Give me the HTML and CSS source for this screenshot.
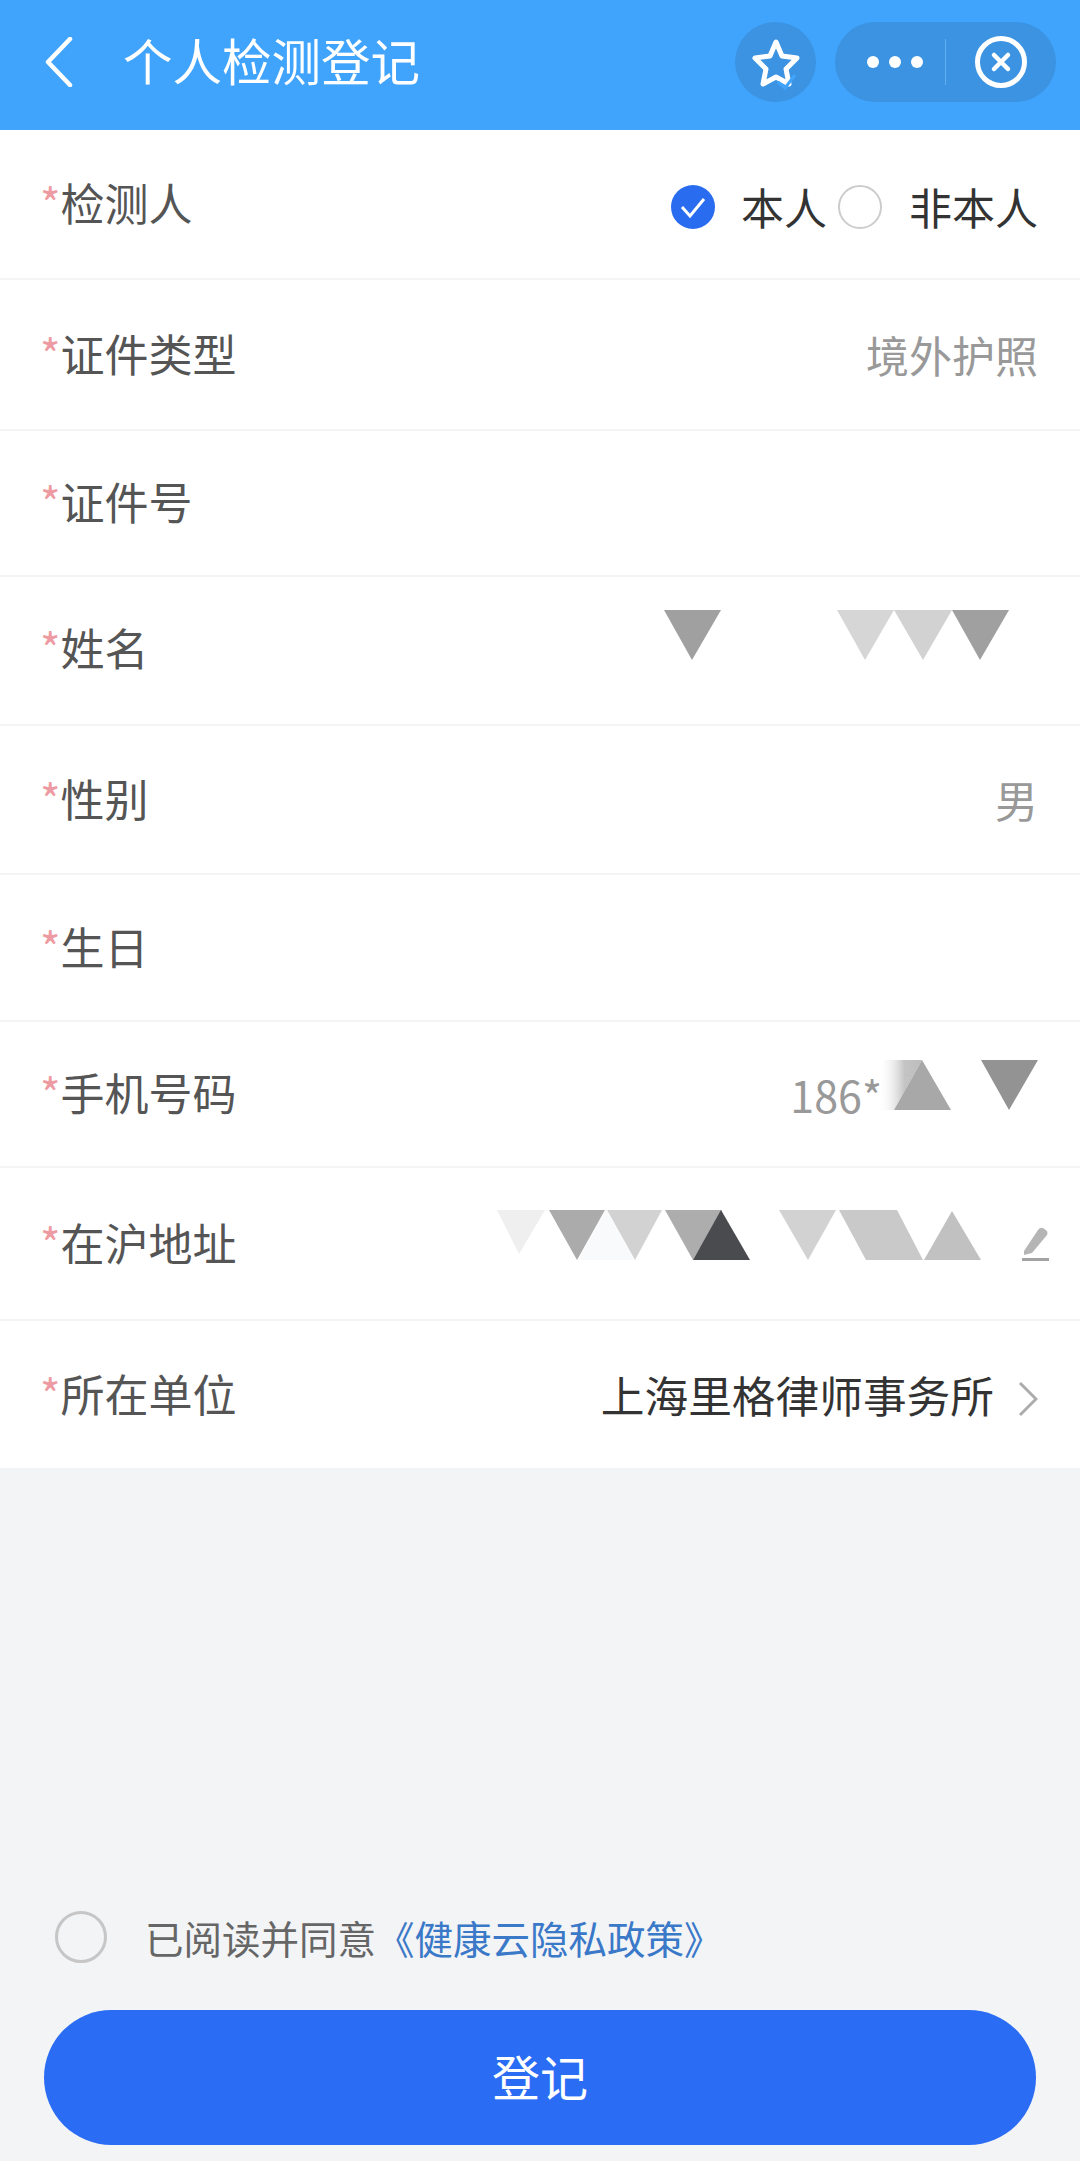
FILE: index.html
```html
<!DOCTYPE html>
<html lang="zh-CN">
<head>
    <meta charset="UTF-8">
    <meta name="viewport" content="width=device-width, initial-scale=1.0">
    <title>个人检测登记</title>
    <link rel="stylesheet" href="styles.css">
</head>
<body>
    <header class="topbar">
        <svg class="back" width="28" height="50" viewBox="0 0 28 50"><path d="M25 2 L3 25 L25 48" fill="none" stroke="#fff" stroke-width="4.5" stroke-linecap="round" stroke-linejoin="round"/></svg>
        <h1 class="title">个人检测登记</h1>
        <div class="actions">
            <div class="star-btn">
                <svg width="50" height="52" viewBox="0 0 50 52"><path d="M25 4 L31 18 L46 20 L35 31 L38 46 L25 39 L12 46 L15 31 L4 20 L19 18 Z" fill="none" stroke="#fff" stroke-width="5" stroke-linejoin="round"/><path d="M27 44 L34 50 L44 37" fill="none" stroke="#41a4fc" stroke-width="3"/></svg>
            </div>
            <div class="capsule">
                <div class="dots"><span></span><span></span><span></span></div>
                <div class="capsule-line"></div>
                <svg class="close" width="54" height="54" viewBox="0 0 54 54"><circle cx="27" cy="27" r="23.5" fill="none" stroke="#fff" stroke-width="5"/><path d="M20 20 L34 34 M34 20 L20 34" stroke="#fff" stroke-width="4.5" stroke-linecap="round"/></svg>
            </div>
        </div>
    </header>

    <main class="form">
        <div class="row">
            <label class="label"><i>*</i>检测人</label>
            <div class="radios">
                <svg class="radio" width="44" height="44" viewBox="0 0 44 44"><circle cx="22" cy="22" r="22" fill="#2a6cf0"/><path d="M11 22 L19 31 L33 14" fill="none" stroke="#fff" stroke-width="3"/></svg>
                <span class="value dark">本人</span>
                <span class="radio-empty"></span>
                <span class="value dark">非本人</span>
            </div>
        </div>
        <div class="row">
            <label class="label"><i>*</i>证件类型</label>
            <span class="value">境外护照</span>
        </div>
        <div class="row">
            <label class="label"><i>*</i>证件号</label>
        </div>
        <div class="row">
            <label class="label name-label"><i>*</i>姓名</label>
            <svg class="mosaic mosaic-name" width="345" height="50" viewBox="0 0 345 50">
                <polygon points="0,0 57,0 28,50" fill="#a0a0a0"/>
                <polygon points="173,0 230,0 201,50" fill="#d6d6d6"/>
                <polygon points="230,0 288,0 259,50" fill="#d2d2d2"/>
                <polygon points="288,0 345,0 316,50" fill="#a0a0a0"/>
            </svg>
        </div>
        <div class="row">
            <label class="label"><i>*</i>性别</label>
            <span class="value">男</span>
        </div>
        <div class="row">
            <label class="label"><i>*</i>生日</label>
        </div>
        <div class="row">
            <label class="label"><i>*</i>手机号码</label>
            <div class="phone">
                <span class="value phone-value">186*</span>
                <svg class="mosaic mosaic-phone" width="160" height="50" viewBox="0 0 160 50">
                    <defs><linearGradient id="fade" x1="0" x2="1" y1="0" y2="0"><stop offset="0" stop-color="#fff" stop-opacity="0"/><stop offset="0.6" stop-color="#c4c4c4"/><stop offset="1" stop-color="#bdbdbd"/></linearGradient></defs>
                    <polygon points="6,0 44,0 16,50 0,50" fill="url(#fade)"/>
                    <polygon points="44,0 73,50 16,50" fill="#a8a8a8"/>
                    <polygon points="103,0 160,0 131,50" fill="#939393"/>
                </svg>
            </div>
        </div>
        <div class="row">
            <label class="label"><i>*</i>在沪地址</label>
            <div class="address">
                <svg class="mosaic mosaic-address" width="484" height="50" viewBox="0 0 484 50">
                    <polygon points="0,0 48,0 22,44" fill="#efefef"/>
                    <polygon points="52,0 108,0 80,50" fill="#ababab"/>
                    <polygon points="81,50 109,0 137,50" fill="#f9fafb"/>
                    <polygon points="110,0 165,0 138,50" fill="#d2d2d2"/>
                    <polygon points="168,0 225,0 196,50" fill="#adadad"/>
                    <polygon points="196,50 224,0 253,50" fill="#4a4b4e"/>
                    <polygon points="282,0 339,0 311,50" fill="#d2d2d2"/>
                    <polygon points="342,0 400,0 426,50 369,50" fill="#c9c9c9"/>
                    <polygon points="427,50 455,1 484,50" fill="#c1c1c1"/>
                </svg>
                <svg class="pencil" width="28" height="34" viewBox="0 0 28 34"><path d="M3 24 L17 3 Q19 0 22 1 L26 4 Q27 6 26 8 L11 26 L3 28 Z" fill="#b5b5b5"/><rect x="1" y="31" width="27" height="3" fill="#a3a3a3"/></svg>
            </div>
        </div>
        <div class="row">
            <label class="label"><i>*</i>所在单位</label>
            <div class="company">
                <span class="value dark company-value">上海里格律师事务所</span>
                <svg class="chevron" width="20" height="36" viewBox="0 0 20 36"><path d="M2 2 L18 18 L2 34" fill="none" stroke="#acacac" stroke-width="3"/></svg>
            </div>
        </div>
    </main>

    <footer class="footer">
        <div class="agree">
            <span class="agree-radio"></span>
            <span class="agree-text">已阅读并同意<a class="agree-link">《健康云隐私政策》</a></span>
        </div>
        <button class="submit">登记</button>
    </footer>
</body>
</html>
```

FILE: styles.css
```css
* {
    box-sizing: border-box;
}

body {
    margin: 0;
    height: 2161px;
    display: flex;
    flex-direction: column;
    background: #f3f4f6;
    font-family: "Noto Sans CJK SC", "Noto Sans", sans-serif;
}

.topbar {
    height: 130px;
    flex: none;
    display: flex;
    align-items: center;
    padding: 0 24px 6px 45px;
    background: #41a4fc;
    color: #fff;
}

.back {
    flex: none;
}

.title {
    margin: 0 0 4px 50px;
    font-size: 49.5px;
    font-weight: 400;
    line-height: 1;
}

.actions {
    margin-left: auto;
    display: flex;
    gap: 19px;
}

.star-btn {
    width: 81px;
    height: 80px;
    padding-top: 4px;
    border-radius: 50%;
    background: #3b93e2;
    display: flex;
    align-items: center;
    justify-content: center;
}

.capsule {
    width: 221px;
    height: 80px;
    border-radius: 40px;
    background: #3b93e2;
    display: flex;
    align-items: center;
    padding-left: 32px;
}

.dots {
    display: flex;
    gap: 10px;
}

.dots span {
    width: 12px;
    height: 12px;
    border-radius: 50%;
    background: #fff;
}

.capsule-line {
    width: 1px;
    height: 46px;
    margin-left: 22px;
    background: #62aef0;
}

.close {
    margin-left: 28px;
}

.form {
    display: grid;
    grid-template-rows: 150px 151px 146px 149px 149px 147px 146px 153px 147px;
    background: #fff;
}

.row {
    display: flex;
    align-items: center;
    justify-content: space-between;
    padding: 0 42px 0 40px;
    border-bottom: 2px solid #f3f4f6;
}

.row:last-child {
    border-bottom: none;
}

.label {
    margin-bottom: 4px;
    font-size: 44px;
    line-height: 1;
    color: #555;
}

.name-label {
    margin-bottom: 8px;
}

.label i {
    font-style: normal;
    color: #ee9aa2;
}

.value {
    font-size: 43px;
    line-height: 1;
    color: #999;
}

.value.dark {
    color: #333;
}

.company-value {
    font-size: 43.7px;
}

.radios {
    display: flex;
    align-items: center;
    padding-top: 5px;
}

.radio {
    margin-right: 26px;
}

.radio-empty {
    width: 44px;
    height: 44px;
    margin: 0 27px 0 11px;
    border: 2px solid #ccc;
    border-radius: 50%;
}

.mosaic {
    display: block;
    flex: none;
}

.mosaic-name {
    margin: 0 29px 32px 0;
}

.phone {
    display: flex;
    align-items: center;
}

.phone-value {
    margin-right: -4px;
}

.mosaic-phone {
    margin-bottom: 18px;
}

.address {
    display: flex;
    align-items: center;
}

.mosaic-address {
    margin-bottom: 17px;
}

.pencil {
    margin: 0 -11px 0 40px;
}

.company {
    display: flex;
    align-items: center;
    gap: 24px;
}

.chevron {
    margin-top: 8px;
}

.footer {
    margin-top: auto;
    padding: 0 44px 16px;
}

.agree {
    display: flex;
    align-items: center;
    margin-bottom: 45px;
    padding-left: 11px;
}

.agree-radio {
    width: 52px;
    height: 52px;
    border: 3px solid #c6c6c6;
    border-radius: 50%;
}

.agree-text {
    margin-left: 38px;
    font-size: 38.5px;
    color: #666;
}

.agree-link {
    color: #3a78c8;
}

.submit {
    display: block;
    width: 100%;
    height: 135px;
    padding-bottom: 6px;
    border: none;
    border-radius: 68px;
    background: #2a6df4;
    color: #fff;
    font-family: inherit;
    font-size: 48px;
}
```
